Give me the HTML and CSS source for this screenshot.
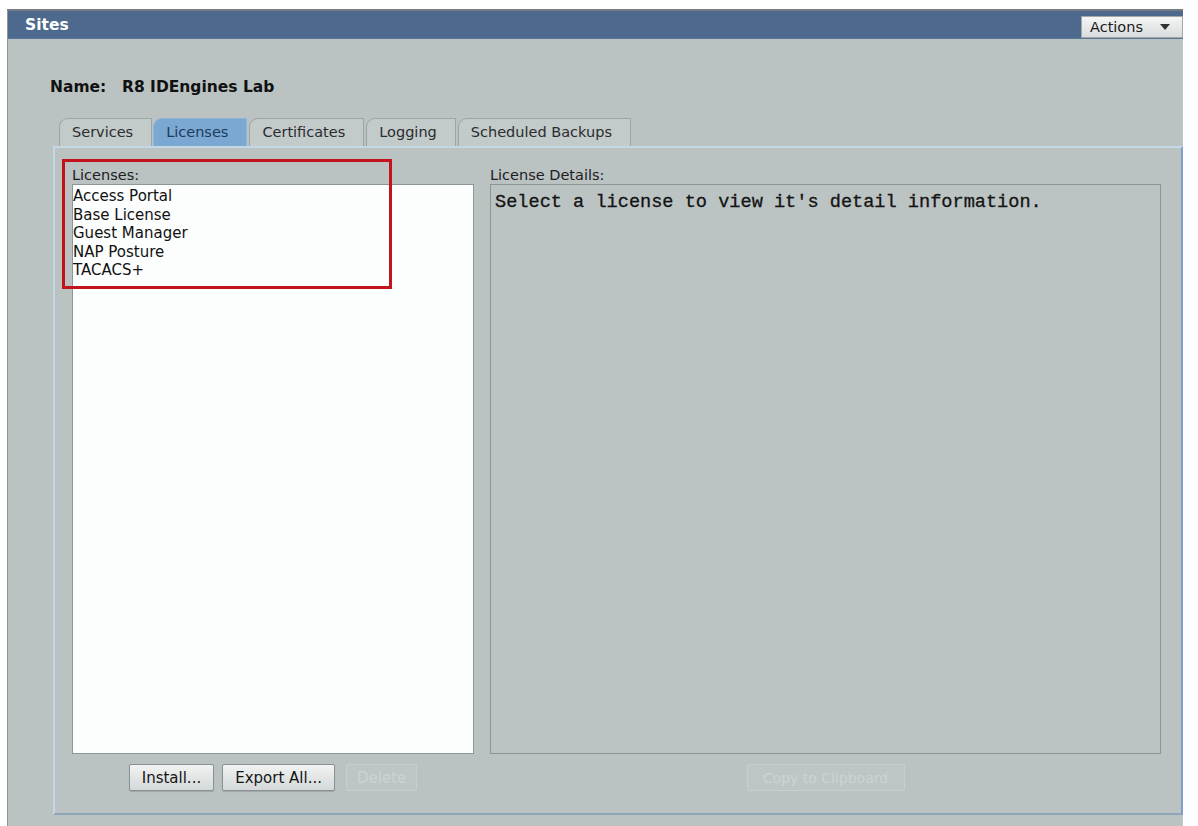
FILE: index.html
```html
<!DOCTYPE html>
<html>
<head>
<meta charset="utf-8">
<link rel="stylesheet" href="styles.css">
</head>
<body>
<div class="frame">
  <div class="titlebar">
    <span class="title">Sites</span>
    <button class="actions">Actions <span class="tri"></span></button>
  </div>
  <div class="content">
    <div class="name"><span class="name-label">Name:</span><span>R8 IDEngines Lab</span></div>
    <div class="tabs">
      <div class="tab">Services</div>
      <div class="tab active">Licenses</div>
      <div class="tab">Certificates</div>
      <div class="tab">Logging</div>
      <div class="tab">Scheduled Backups</div>
    </div>
    <div class="panel">
      <div class="col col-left">
        <div class="label">Licenses:</div>
        <div class="listbox">
          <div class="item">Access Portal</div>
          <div class="item">Base License</div>
          <div class="item">Guest Manager</div>
          <div class="item">NAP Posture</div>
          <div class="item">TACACS+</div>
        </div>
        <div class="btnrow">
          <button class="btn">Install...</button>
          <button class="btn">Export All...</button>
          <button class="btn disabled">Delete</button>
        </div>
        <div class="highlight"></div>
      </div>
      <div class="col col-right">
        <div class="label">License Details:</div>
        <div class="details">Select a license to view it's detail information.</div>
        <div class="btnrow">
          <button class="btn disabled wide">Copy to Clipboard</button>
        </div>
      </div>
    </div>
  </div>
</div>
</body>
</html>
```
FILE: styles.css
```css
html, body {
  margin: 0;
  padding: 0;
  background: #ffffff;
}
body {
  padding: 9px 15px 0 7px;
  height: 826px;
  box-sizing: border-box;
  overflow: hidden;
  font-family: "DejaVu Sans", Verdana, sans-serif;
  color: #1b1d1f;
}
.frame {
  height: 817px;
  background: #bac2c2;
  border-top: 2px solid #767c80;
  border-left: 1px solid #8d9597;
  display: flex;
  flex-direction: column;
}
.titlebar {
  height: 27px;
  background: #4d6a8e;
  display: flex;
  align-items: center;
  justify-content: space-between;
  border-bottom: 1px solid #5b7698;
}
.title {
  color: #ffffff;
  font-weight: bold;
  font-size: 15.5px;
  padding-left: 17px;
  padding-top: 1px;
}
.actions {
  margin-top: 5px;
  height: 22px;
  width: 102px;
  border: 1px solid #a2a8aa;
  background: linear-gradient(#f4f5f5, #dadddd);
  font-family: "DejaVu Sans", Verdana, sans-serif;
  font-size: 14.5px;
  color: #1a1a1a;
  display: flex;
  align-items: center;
  justify-content: space-between;
  padding: 0 12px 0 8px;
  box-sizing: border-box;
}
.tri {
  width: 0;
  height: 0;
  border-left: 5px solid transparent;
  border-right: 5px solid transparent;
  border-top: 6px solid #333;
}
.content {
  flex: 1;
  display: flex;
  flex-direction: column;
  padding: 0 0 0 45px;
}
.name {
  margin-top: 39px;
  height: 19px;
  font-weight: bold;
  font-size: 15.5px;
  color: #111;
  margin-left: -3px;
}
.name-label {
  display: inline-block;
  width: 72px;
}
.tabs {
  margin-top: 20px;
  display: flex;
  gap: 2px;
  padding-left: 6px;
  height: 29px;
  align-items: flex-end;
}
.tab {
  height: 28px;
  box-sizing: border-box;
  padding: 5px 18px 0 12px;
  font-size: 14.5px;
  color: #2a2c2e;
  background: #c3caca;
  border: 1px solid #9ba4a6;
  border-bottom: none;
  border-radius: 9px 1px 0 0;
}
.tab.active {
  background: #7aa8d3;
  border-color: #8fb4d6;
  color: #1d3b5c;
  margin-left: -1px;
}
.panel {
  height: 669px;
  box-sizing: border-box;
  border: 2px solid #c4d7e4;
  border-right: 2px solid #7d9ec8;
  border-bottom: 2px solid #8ea4b8;
  display: flex;
  gap: 16px;
  padding: 18px 20px 0 17px;
}
.col {
  display: flex;
  flex-direction: column;
  position: relative;
}
.col-left {
  width: 402px;
}
.col-right {
  flex: 1;
}
.label {
  height: 18px;
  font-size: 14.5px;
  color: #1e2022;
  line-height: 18px;
  white-space: nowrap;
}
.listbox {
  height: 570px;
  box-sizing: border-box;
  background: #fcfdfd;
  border: 1px solid #8d9698;
  padding-top: 2px;
}
.item {
  font-size: 15px;
  line-height: 18.5px;
  color: #111;
}
.details {
  height: 570px;
  box-sizing: border-box;
  border: 1px solid #8b9496;
  background: #bbc3c3;
  padding: 7px 4px;
  font-family: "Liberation Mono", "Courier New", monospace;
  font-size: 18.6px;
  color: #141414;
  white-space: nowrap;
  -webkit-text-stroke: 0.3px #141414;
}
.btnrow {
  display: flex;
  justify-content: center;
  gap: 8px;
  margin-top: 10px;
}
.btn {
  height: 27px;
  box-sizing: border-box;
  border: 1px solid #8a9193;
  border-radius: 2px;
  background: linear-gradient(#f2f3f3, #d4d8d8);
  font-family: "DejaVu Sans", Verdana, sans-serif;
  font-size: 15px;
  color: #161616;
  padding: 0 12px;
  white-space: nowrap;
  box-shadow: 0 1px 1px rgba(0,0,0,0.15);
}
.btn.disabled {
  background: #bdc5c5;
  border-color: #c8cece;
  color: #cdd3d3;
  box-shadow: none;
  padding: 0 10px;
  margin-left: 3px;
}
.btn.wide {
  width: 158px;
  margin-left: 0;
  padding: 0 4px;
  font-size: 14px;
}
.highlight {
  position: absolute;
  left: -10px;
  top: -7px;
  width: 330px;
  height: 130px;
  box-sizing: border-box;
  border: 3px solid #c3141d;
}
```
